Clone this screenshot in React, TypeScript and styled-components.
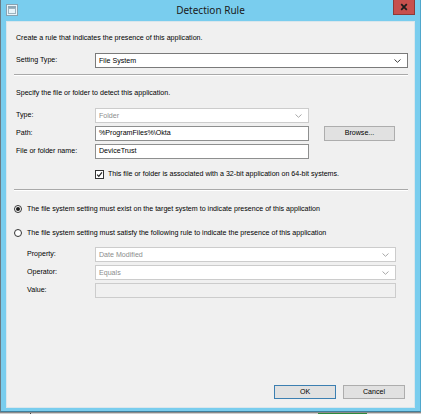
import styled, { createGlobalStyle } from 'styled-components';

const GlobalStyle = createGlobalStyle`
  html, body {
    margin: 0;
    padding: 0;
    background: #d4d4d4;
  }
  body {
    font-family: "Liberation Sans", Arial, sans-serif;
  }
`;

export default function App() {
  return (
    <>
      <GlobalStyle />
      <Screen>
        <Window>
          <TitleBar>
            <AppIcon viewBox="0 0 12 12" width="12" height="12">
              <rect x="0.5" y="0.5" width="11" height="11" fill="#e9f4fa" stroke="#8aa2b0" />
              <rect x="2" y="2" width="8" height="2" fill="#8fa8b6" />
              <rect x="2.5" y="4.5" width="7" height="5" fill="none" stroke="#9db3bf" />
            </AppIcon>
            <Title>Detection Rule</Title>
            <CloseButton>
              <svg viewBox="0 0 10 10" width="8" height="8">
                <path d="M1.5 1.5 L8.5 8.5 M8.5 1.5 L1.5 8.5" stroke="#1c1c1c" strokeWidth="2.2" />
              </svg>
            </CloseButton>
          </TitleBar>

          <Client>
            <Text>Create a rule that indicates the presence of this application.</Text>

            <SettingRow>
              <Label>Setting Type:</Label>
              <Combo>
                <span>File System</span>
                <Chevron />
              </Combo>
            </SettingRow>

            <Separator />

            <Text $top={12}>Specify the file or folder to detect this application.</Text>

            <FormGrid $indent={0} $top={10}>
              <Label>Type:</Label>
              <Combo $disabled>
                <span>Folder</span>
                <Chevron $disabled />
              </Combo>
              <span />

              <Label>Path:</Label>
              <TextBox>%ProgramFiles%\Okta</TextBox>
              <Button>Browse...</Button>

              <Label>File or folder name:</Label>
              <TextBox>DeviceTrust</TextBox>
              <span />
            </FormGrid>

            <CheckRow>
              <CheckBox>
                <svg viewBox="0 0 8 8" width="8" height="8">
                  <path d="M1.3 4.2 L3.2 6.1 L6.8 1.6" fill="none" stroke="#222" strokeWidth="1.4" />
                </svg>
              </CheckBox>
              <Text $top={0}>This file or folder is associated with a 32-bit application on 64-bit systems.</Text>
            </CheckRow>

            <Separator $top={10} />

            <RadioRow $top={13}>
              <Radio $checked />
              <Text $top={0}>The file system setting must exist on the target system to indicate presence of this application</Text>
            </RadioRow>
            <RadioRow $top={14}>
              <Radio />
              <Text $top={0}>The file system setting must satisfy the following rule to indicate the presence of this application</Text>
            </RadioRow>

            <FormGrid $indent={11} $top={9}>
              <Label>Property:</Label>
              <Combo $disabled>
                <span>Date Modified</span>
                <Chevron $disabled />
              </Combo>

              <Label>Operator:</Label>
              <Combo $disabled>
                <span>Equals</span>
                <Chevron $disabled />
              </Combo>

              <Label>Value:</Label>
              <TextBox $disabled />
            </FormGrid>

            <Footer>
              <DialogButton $default>OK</DialogButton>
              <DialogButton>Cancel</DialogButton>
            </Footer>
          </Client>
        </Window>
        <Taskbar>
          <TaskTick />
          <TaskItem />
        </Taskbar>
      </Screen>
    </>
  );
}

function Chevron({ $disabled }: { $disabled?: boolean }) {
  return (
    <ChevronIcon viewBox="0 0 7 4" width="7" height="4">
      <path d="M0.5 0.5 L3.5 3.3 L6.5 0.5" fill="none" stroke={$disabled ? '#a8a8a8' : '#3c3c3c'} strokeWidth="1" />
    </ChevronIcon>
  );
}

const Screen = styled.div`
  width: 421px;
  height: 414px;
  display: flex;
  flex-direction: column;
  overflow: hidden;
`;

const Window = styled.div`
  height: 412px;
  box-sizing: border-box;
  display: flex;
  flex-direction: column;
  background: #79cdee;
  border-left: 1px solid #6b7b84;
  border-right: 1px solid #4fa7cc;
  border-bottom: 1px solid #3f7f9c;
  padding: 0 5px 3px 5px;
`;

const TitleBar = styled.div`
  height: 21px;
  display: grid;
  grid-template-columns: 1fr auto 1fr;
  align-items: center;
`;

const AppIcon = styled.svg`
  justify-self: start;
  margin-top: -1px;
`;

const Title = styled.div`
  font-family: "Noto Sans", "Liberation Sans", sans-serif;
  font-size: 10px;
  color: #1a1a1a;
  margin-top: -1px;
`;

const CloseButton = styled.div`
  justify-self: end;
  align-self: start;
  width: 22px;
  height: 15px;
  margin-right: 0;
  background: #c7504d;
  border: 1px solid #8d3a37;
  border-top: none;
  box-sizing: border-box;
  display: flex;
  align-items: center;
  justify-content: center;
`;

const Client = styled.div`
  flex: 1;
  display: flex;
  flex-direction: column;
  background: #f0f0f0;
  border: 1px solid #d9e6ec;
  padding: 0 6px 8px 9px;
  font-size: 7.1px;
  color: #000;
`;

const Text = styled.div<{ $top?: number }>`
  height: 10px;
  line-height: 10px;
  margin-top: ${(p) => (p.$top ?? 11)}px;
  white-space: nowrap;
`;

const Label = styled.div`
  line-height: 15px;
  white-space: nowrap;
`;

const SettingRow = styled.div`
  display: grid;
  grid-template-columns: 79px 1fr;
  height: 15px;
  margin-top: 10px;
`;

const Separator = styled.div<{ $top?: number }>`
  height: 0;
  margin-top: ${(p) => (p.$top ?? 6)}px;
  margin-left: -2px;
  border-top: 1px solid #a9a9a9;
  border-bottom: 1px solid #ffffff;
`;

const FormGrid = styled.div<{ $indent: number; $top: number }>`
  display: grid;
  grid-template-columns: ${(p) => 79 - p.$indent}px ${(p) => (p.$indent ? '1fr' : '214px 86px')};
  grid-auto-rows: 15px;
  row-gap: 3px;
  margin-top: ${(p) => p.$top}px;
  padding-left: ${(p) => p.$indent}px;
  padding-right: ${(p) => (p.$indent ? 12 : 0)}px;
`;

const Combo = styled.div<{ $disabled?: boolean }>`
  box-sizing: border-box;
  height: 15px;
  display: flex;
  align-items: center;
  justify-content: space-between;
  padding: 0 6px 0 3px;
  background: #ffffff;
  border: 1px solid ${(p) => (p.$disabled ? '#cccccc' : '#7a7a7a')};
  color: ${(p) => (p.$disabled ? '#8d8d8d' : '#000')};
`;

const ChevronIcon = styled.svg`
  flex: none;
`;

const TextBox = styled.div<{ $disabled?: boolean }>`
  box-sizing: border-box;
  height: 15px;
  line-height: 13px;
  padding: 0 3px;
  background: ${(p) => (p.$disabled ? '#f0f0f0' : '#ffffff')};
  border: 1px solid ${(p) => (p.$disabled ? '#cccccc' : '#8e8f8f')};
`;

const Button = styled.div`
  box-sizing: border-box;
  margin-left: 15px;
  width: 71px;
  height: 15px;
  line-height: 13px;
  text-align: center;
  background: #e1e1e1;
  border: 1px solid #adadad;
`;

const CheckRow = styled.div`
  display: flex;
  align-items: center;
  gap: 4px;
  height: 10px;
  margin-top: 10px;
  padding-left: 79px;
`;

const CheckBox = styled.div`
  box-sizing: border-box;
  width: 9px;
  height: 9px;
  border: 1px solid #333;
  background: #fff;
  display: flex;
  align-items: center;
  justify-content: center;
  svg {
    width: 7px;
    height: 7px;
  }
`;

const RadioRow = styled.div<{ $top: number }>`
  display: flex;
  align-items: center;
  gap: 5px;
  height: 10px;
  margin-top: ${(p) => p.$top}px;
  margin-left: -2px;
`;

const Radio = styled.div<{ $checked?: boolean }>`
  box-sizing: border-box;
  width: 8px;
  height: 8px;
  border-radius: 50%;
  border: 1px solid #333;
  background: #fff;
  display: flex;
  align-items: center;
  justify-content: center;
  &::after {
    content: '';
    width: 4px;
    height: 4px;
    border-radius: 50%;
    background: ${(p) => (p.$checked ? '#1a1a1a' : 'transparent')};
  }
`;

const Footer = styled.div`
  margin-top: auto;
  display: flex;
  justify-content: flex-end;
  gap: 7px;
  padding-right: 3px;
`;

const DialogButton = styled.div<{ $default?: boolean }>`
  box-sizing: border-box;
  width: 62px;
  height: 14px;
  line-height: 12px;
  text-align: center;
  background: #e1e1e1;
  border: 1px solid ${(p) => (p.$default ? '#3c7fb1' : '#adadad')};
`;

const Taskbar = styled.div`
  flex: 1;
  display: flex;
  background: #cfcfcf;
  border-top: 1px solid #8a8a8a;
`;

const TaskTick = styled.div`
  width: 1px;
  margin-left: 30px;
  background: #444;
`;

const TaskItem = styled.div`
  width: 49px;
  margin-left: 287px;
  background: #2e8b3e;
`;
